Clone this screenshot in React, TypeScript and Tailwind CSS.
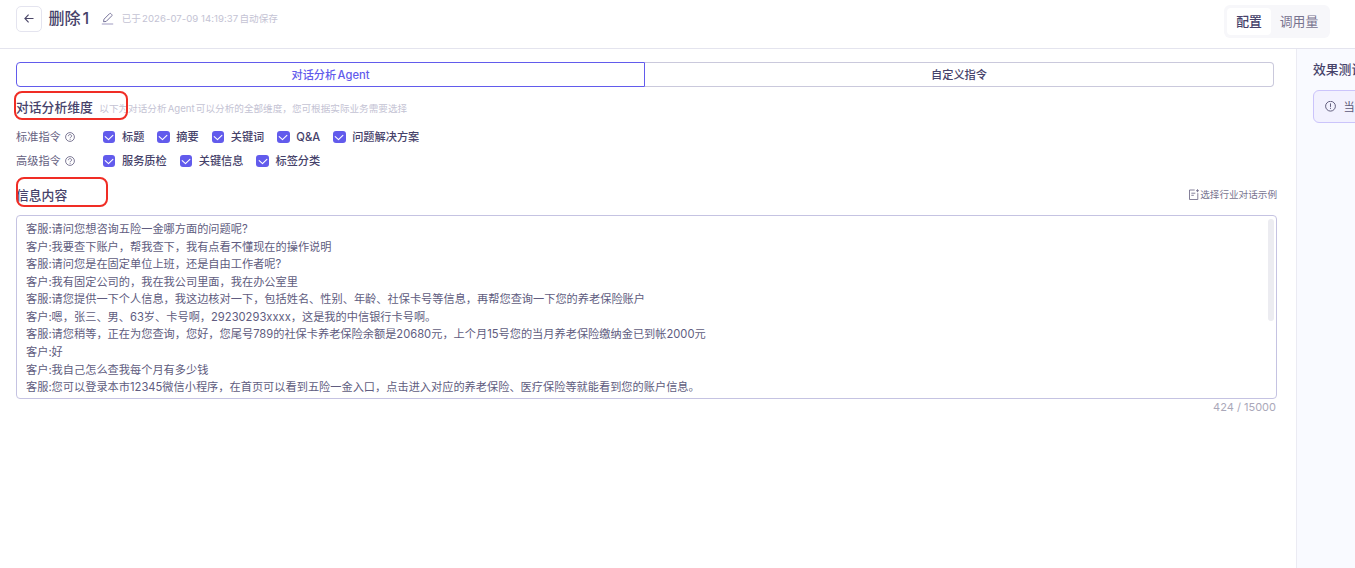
import React from 'react';

const standard = ['标题', '摘要', '关键词', 'Q&A', '问题解决方案'];
const advanced = ['服务质检', '关键信息', '标签分类'];

const dialogue = [
  '客服:请问您想咨询五险一金哪方面的问题呢?',
  '客户:我要查下账户，帮我查下，我有点看不懂现在的操作说明',
  '客服:请问您是在固定单位上班，还是自由工作者呢?',
  '客户:我有固定公司的，我在我公司里面，我在办公室里',
  '客服:请您提供一下个人信息，我这边核对一下，包括姓名、性别、年龄、社保卡号等信息，再帮您查询一下您的养老保险账户',
  '客户:嗯，张三、男、63岁、卡号啊，29230293xxxx，这是我的中信银行卡号啊。',
  '客服:请您稍等，正在为您查询，您好，您尾号789的社保卡养老保险余额是20680元，上个月15号您的当月养老保险缴纳金已到帐2000元',
  '客户:好',
  '客户:我自己怎么查我每个月有多少钱',
  '客服:您可以登录本市12345微信小程序，在首页可以看到五险一金入口，点击进入对应的养老保险、医疗保险等就能看到您的账户信息。',
];

function HelpIcon() {
  return (
    <svg className="ml-[4px] size-[10px]" viewBox="0 0 10 10" fill="none" stroke="#6f6b8a" strokeWidth="0.9">
      <circle cx="5" cy="5" r="4.4" />
      <path d="M3.3 4.2c0-1 .7-1.6 1.7-1.6s1.7.6 1.7 1.4c0 1.1-1.6 1-1.6 2.1M5.1 6.8v1" />
    </svg>
  );
}

function CheckItem({ label }: { label: string }) {
  return (
    <label className="flex items-center gap-[6.6px] font-medium text-[#46426a]">
      <span className="flex size-[12.6px] items-center justify-center rounded-[3px] bg-[#625bec]">
        <svg className="size-[10px]" viewBox="0 0 10 10" fill="none" stroke="#fff" strokeWidth="1.1" strokeLinecap="round" strokeLinejoin="round">
          <path d="M1.2 4.7 4.5 7.7 8.9 3.3" />
        </svg>
      </span>
      <span>{label}</span>
    </label>
  );
}

function CheckRow({ title, items }: { title: string; items: string[] }) {
  return (
    <div className="flex h-6 items-center text-[11.2px]">
      <div className="flex w-[86.8px] items-center text-[#65617f]">
        {title}
        <HelpIcon />
      </div>
      <div className="flex gap-[12.8px]">
        {items.map((item) => (
          <CheckItem key={item} label={item} />
        ))}
      </div>
    </div>
  );
}

export default function App() {
  return (
    <div className="flex h-[568px] w-full flex-col overflow-hidden bg-white font-['Inter','Noto_Sans_CJK_SC',sans-serif] text-[#46426a] [text-autospace:normal]">
      <header className="flex h-[49px] shrink-0 justify-between border-b border-[#e4e4ee] pr-[25px] pl-4">
        <div className="flex h-[37px] items-center">
          <button className="flex size-[26px] items-center justify-center rounded-[5px] border border-[#e4e4ef]">
            <svg className="size-[10px]" viewBox="0 0 10 10" fill="none" stroke="#4b4768" strokeWidth="1.1">
              <path d="M9.5 4.5H.9M4.6.7.9 4.5l3.7 3.8" />
            </svg>
          </button>
          <h1 className="-mt-[2px] ml-[6.5px] text-[16px] font-medium">删除1</h1>
          <svg className="ml-[11.5px] size-[13px]" viewBox="0 0 13 13" fill="none" stroke="#77739a">
            <path d="M2.5 9.7 3 7.2 8.6 1.6c.4-.4.8-.4 1.2 0l1 1c.4.4.4.8 0 1.2L5.1 9.5l-2.6.2Z" strokeWidth="1" />
            <path d="M.8 12h11.4" stroke="#b5b2cf" strokeWidth="1.3" />
          </svg>
          <span className="mt-[2px] ml-[8px] text-[9.6px] tracking-[0.04px] text-[#c4c3d4]">已于2026-07-09 14:19:37自动保存</span>
        </div>
        <div className="mt-[5px] flex h-[33px] w-[106px] rounded-[6px] bg-[#f7f7fa] p-[3px] text-[12.8px]">
          <div className="flex w-[44px] items-center justify-center rounded-[4px] bg-white font-medium">配置</div>
          <div className="flex flex-1 items-center justify-center text-[#77738f]">调用量</div>
        </div>
      </header>

      <div className="flex min-h-0 flex-1">
        <main className="min-w-0 flex-1 pt-[13px] pl-4">
          <div className="flex h-[25px] w-[1258px] text-[11.2px] font-medium">
            <div className="flex w-[629px] items-center justify-center rounded-l-[4px] border border-[#625bec] pt-[2px] text-[#625bec]">对话分析Agent</div>
            <div className="flex flex-1 items-center justify-center rounded-r-[4px] border border-l-0 border-[#cac9dc] pt-[2px]">自定义指令</div>
          </div>

          <div className="relative mt-[10px] flex h-[22px] items-center">
            <h2 className="text-[12.8px] font-medium">对话分析维度</h2>
            <span className="ml-[6.5px] pt-[2px] text-[9.6px] tracking-[0.01px] text-[#c4c3d4]">以下为对话分析Agent可以分析的全部维度，您可根据实际业务需要选择</span>
            <div className="absolute -top-[6px] -left-[2px] h-[29px] w-[114px] rounded-[8px] border-2 border-[#f02d25]" />
          </div>

          <div className="mt-[6px]">
            <CheckRow title="标准指令" items={standard} />
            <CheckRow title="高级指令" items={advanced} />
          </div>

          <div className="relative mt-[11px] flex h-[22px] w-[1261px] items-center justify-between">
            <h2 className="pt-px text-[12.8px] font-medium">信息内容</h2>
            <div className="flex items-center gap-px pt-px text-[9.6px] text-[#77738f]">
              <svg className="-mt-[2px] size-[11px]" viewBox="0 0 11 11" fill="none" stroke="#77738f" strokeWidth="0.9">
                <path d="M6.7 1H1.5v9.5h8.3V4.2M3.3 4.2h4M3.3 6.3h2.5M9.5.2v3M8 1.7h3" />
              </svg>
              选择行业对话示例
            </div>
            <div className="absolute -top-[7px] left-0 h-[30px] w-[92px] rounded-[8px] border-2 border-[#f02d25]" />
          </div>

          <div className="mt-[9px] flex h-[184px] w-[1261px] justify-between rounded-[4px] border border-[#c5c3e2] pt-[5px] pr-[2px] pl-[9px]">
            <div className="text-[11.2px] leading-[17.58px] tracking-[0.008px] whitespace-nowrap text-[#605c80] [text-autospace:no-autospace]">
              {dialogue.map((line) => (
                <p key={line}>{line}</p>
              ))}
            </div>
            <div className="-mt-[2px] h-[102px] w-[6px] rounded-[3px] bg-[#ececf1]" />
          </div>
          <div className="w-[1260px] text-right text-[11px] leading-[17px] text-[#aaa8b9]">424 / 15000</div>
        </main>

        <aside className="w-[59px] shrink-0 overflow-hidden border-l border-[#ebebf3] bg-[#f9faff] pt-[10px] pl-4">
          <h2 className="text-[12.8px] leading-[22px] font-medium whitespace-nowrap">效果测试</h2>
          <div className="mt-[9px] flex h-[33px] w-[300px] items-center rounded-[6px] border border-[#cbc4fb] bg-[#f2f1fe] pl-[11px] text-[11.2px] text-[#5c5878]">
            <svg className="mr-[7.5px] size-[11px]" viewBox="0 0 11 11" fill="none" stroke="#5c5878" strokeWidth="0.95">
              <circle cx="5.5" cy="5.2" r="4.9" />
              <path d="M5.5 2.4v3.5M5.5 6.8v1.1" />
            </svg>
            <span className="pt-px">当前</span>
          </div>
        </aside>
      </div>
    </div>
  );
}
